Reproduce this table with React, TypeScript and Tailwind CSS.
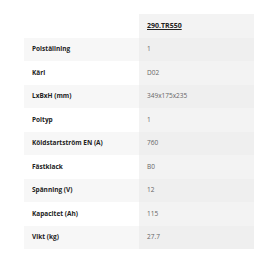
const rows: [string, string][] = [
  ["Polställning", "1"],
  ["Kärl", "D02"],
  ["LxBxH (mm)", "349x175x235"],
  ["Poltyp", "1"],
  ["Köldstartström EN (A)", "760"],
  ["Fästklack", "B0"],
  ["Spänning (V)", "12"],
  ["Kapacitet (Ah)", "115"],
  ["Vikt (kg)", "27.7"],
];

export default function App() {
  return (
    <div className="w-[259px] h-[259px] bg-white pt-[14px] pl-[24px] font-['Open_Sans',sans-serif] text-[6.5px]">
      <div className="w-[230px]">
        <div className="flex h-[23.5px]">
          <div className="w-[115px]" />
          <div className="w-[115px] bg-[#f3f3f3] flex items-center pl-[8px]">
            <span className="font-bold text-[7px] text-[#222] underline">290.TR550</span>
          </div>
        </div>
        {rows.map(([label, value], i) => (
          <div
            key={label}
            className={`flex h-[23.5px] ${i % 2 === 0 ? "bg-[#f7f7f7]" : "bg-white"}`}
          >
            <div className="w-[115px] flex items-center pl-[8px] font-bold text-[#222]">
              {label}
            </div>
            <div
              className={`w-[115px] flex items-center pl-[8px] text-[#666] ${
                i % 2 === 0 ? "bg-[#efefef]" : "bg-[#f3f3f3]"
              }`}
            >
              {value}
            </div>
          </div>
        ))}
      </div>
    </div>
  );
}
